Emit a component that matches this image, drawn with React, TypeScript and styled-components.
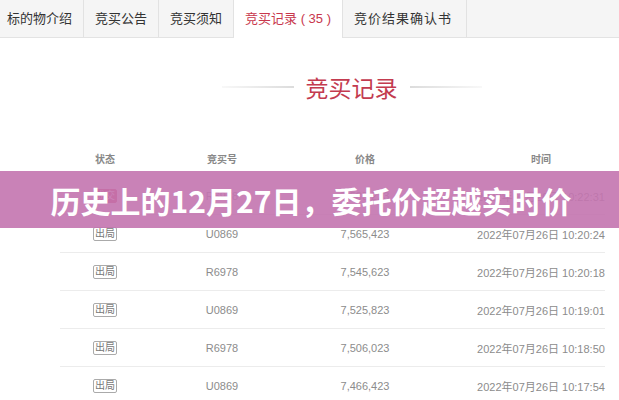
import React from 'react'
import styled, {createGlobalStyle} from 'styled-components'

type Bid = {
    won: boolean
    code: string
    price: string
    time: string
}

const tabs = ['标的物介绍', '竞买公告', '竞买须知', '竞买记录 ( 35 )', '竞价结果确认书']

const bids: Bid[] = [
    {won: true, code: 'R6978', price: '7,585,223', time: '2022年07月26日 10:22:31'},
    {won: false, code: 'U0869', price: '7,565,423', time: '2022年07月26日 10:20:24'},
    {won: false, code: 'R6978', price: '7,545,623', time: '2022年07月26日 10:20:18'},
    {won: false, code: 'U0869', price: '7,525,823', time: '2022年07月26日 10:19:01'},
    {won: false, code: 'R6978', price: '7,506,023', time: '2022年07月26日 10:18:50'},
    {won: false, code: 'U0869', price: '7,466,423', time: '2022年07月26日 10:17:54'},
]

export default function App() {
    return (
        <Page>
            <GlobalStyle />

            <TabBar>
                {tabs.map((tab, idx) => {
                    return <Tab key={idx} $active={idx === 3}>{tab}</Tab>
                })}
            </TabBar>

            <Heading>
                <Line />
                <HeadingText>竞买记录</HeadingText>
                <Line $right />
            </Heading>

            <Table>
                <HeadRow>
                    <Cell>状态</Cell>
                    <Cell>竞买号</Cell>
                    <Cell>价格</Cell>
                    <TimeCell>时间</TimeCell>
                </HeadRow>
                {bids.map((bid, idx) => {
                    return (
                        <Row key={idx}>
                            <Cell><Badge $won={bid.won}>{bid.won ? '成交' : '出局'}</Badge></Cell>
                            <Cell>{bid.code}</Cell>
                            <Cell>{bid.price}</Cell>
                            <TimeCell>{bid.time}</TimeCell>
                        </Row>
                    )
                })}
            </Table>

            <Banner>
                <BannerTitle>历史上的12月27日，委托价超越实时价</BannerTitle>
            </Banner>
        </Page>
    )
}

const GlobalStyle = createGlobalStyle`
    body {
        margin: 0;
        background: #fff;
        font-family: "Liberation Sans", "Noto Sans CJK SC", sans-serif;
    }
`

const Page = styled.div`
    position: relative;
    width: 619px;
    height: 400px;
    overflow: hidden;
    background: #fff;
`

const TabBar = styled.div`
    display: flex;
    height: 37px;
    background: #f5f5f5;
    border-bottom: 1px solid #e3e3e3;
`

const Tab = styled.div<{$active?: boolean}>`
    padding: 0 11px;
    line-height: 37px;
    height: ${p => p.$active ? '38px' : '37px'};
    font-size: 13px;
    color: ${p => p.$active ? '#c8374d' : '#333'};
    background: ${p => p.$active ? '#fff' : 'transparent'};
    border-right: 1px solid #e2e2e2;
    white-space: nowrap;

    &:first-child {
        padding-left: 7px;
    }

    &:last-child {
        letter-spacing: 1px;
        padding-right: 14px;
    }
`

const Heading = styled.div`
    display: flex;
    align-items: center;
    justify-content: center;
    gap: 12px;
    margin-top: 34px;
    height: 30px;
    padding-left: 84px;
`

const Line = styled.div<{$right?: boolean}>`
    width: 72px;
    height: 2px;
    background: linear-gradient(${p => p.$right ? 'to left' : 'to right'}, rgba(220, 220, 220, 0.2), #dcdcdc);
`

const HeadingText = styled.div`
    font-size: 23px;
    color: #c33b4f;
    font-family: "Noto Sans CJK SC", sans-serif;
`

const Table = styled.div`
    width: 545px;
    margin: 37px 0 0 60px;
`

const Row = styled.div`
    display: grid;
    grid-template-columns: 90px 144px 142px 1fr;
    align-items: center;
    height: 38px;
    box-sizing: border-box;
    border-bottom: 1px solid #ececec;
    font-size: 11px;
    color: #8c8c8c;
`

const HeadRow = styled(Row)`
    border-bottom: none;
    font-size: 10px;
    font-weight: bold;
    color: #888;
`

const Cell = styled.div`
    display: flex;
    justify-content: center;
`

const TimeCell = styled(Cell)`
    padding-left: 41px;
`

const Badge = styled.span<{$won: boolean}>`
    font-size: 10px;
    line-height: 12px;
    padding: 0 1px;
    border-radius: 2px;
    border: 1px solid ${p => p.$won ? '#d8405c' : '#aaa'};
    background: ${p => p.$won ? '#d8405c' : '#fff'};
    color: ${p => p.$won ? '#fff' : '#777'};
`

const Banner = styled.div`
    position: absolute;
    top: 171px;
    left: 0;
    right: 0;
    height: 57px;
    display: flex;
    align-items: center;
    justify-content: center;
    background: rgba(195, 116, 175, 0.9);
`

const BannerTitle = styled.div`
    font-family: "Noto Sans CJK SC", sans-serif;
    font-size: 30px;
    font-weight: bold;
    color: #fff;
    padding-left: 3px;
`
